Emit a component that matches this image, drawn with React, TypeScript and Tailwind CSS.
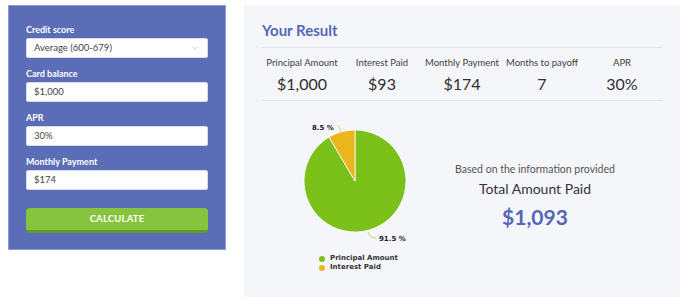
import React from "react";

const F = { fontFamily: "Lato, 'Open Sans', sans-serif" };

function Field({ label, value, select }: { label: string; value: string; select?: boolean }) {
  return (
    <div className="flex flex-col">
      <div className="h-[12px] text-[9px] leading-[12px] font-bold text-white">{label}</div>
      <div className="mt-[2px] h-[20px] bg-white rounded-[2px] border border-[#d8dbe6] flex items-center justify-between pl-[7px] pr-[9px] text-[9.5px] text-[#444]">
        <span>{value}</span>
        {select && (
          <svg width="6" height="4" viewBox="0 0 6 4">
            <path d="M0.5 0.5 L3 3 L5.5 0.5" fill="none" stroke="#c3c6cf" strokeWidth="0.8" />
          </svg>
        )}
      </div>
    </div>
  );
}

function Stat({ label, value }: { label: string; value: string }) {
  return (
    <div className="w-[80px] flex flex-col items-center">
      <div className="text-[9.5px] leading-[12px] text-[#3d3d3d] whitespace-nowrap">{label}</div>
      <div className="mt-[5px] text-[16px] leading-[20px] text-[#2f2f2f]">{value}</div>
    </div>
  );
}

function Pie() {
  const cx = 93, cy = 65, r = 51;
  const a = (8.5 / 100) * Math.PI * 2;
  const px = cx - r * Math.sin(a);
  const py = cy - r * Math.cos(a);
  const green = `M${cx} ${cy} L${cx} ${cy - r} A${r} ${r} 0 1 1 ${px} ${py} Z`;
  const yellow = `M${cx} ${cy} L${px} ${py} A${r} ${r} 0 0 1 ${cx} ${cy - r} Z`;
  return (
    <svg width="186" height="130" viewBox="0 0 186 130" style={{ fontFamily: "'DejaVu Sans', sans-serif" }}>
      <path d={green} fill="#7cc11a" stroke="#ffffff" strokeWidth="0.8" />
      <path d={yellow} fill="#ebb51e" stroke="#ffffff" strokeWidth="0.8" />
      <path d="M79 16 C78 12 77 10 75 9" fill="none" stroke="#ebb51e" strokeWidth="0.7" />
      <path d="M106 116 C108 120 110 122 114 122" fill="none" stroke="#7cc11a" strokeWidth="0.7" />
      <text x="50" y="14" fontSize="7" fontWeight="bold" fill="#222">8.5 %</text>
      <text x="117" y="125" fontSize="7" fontWeight="bold" fill="#222">91.5 %</text>
    </svg>
  );
}

export default function App() {
  return (
    <div className="w-[700px] h-[297px] bg-white flex overflow-hidden" style={F}>
      <div className="ml-[8px] mt-[5px] w-[218px] h-[245px] bg-[#5a6db6] border border-[#8b9ad0] px-[17px] pt-[18px] flex flex-col">
        <Field label="Credit score" value="Average (600-679)" select />
        <div className="mt-[10px]">
          <Field label="Card balance" value="$1,000" />
        </div>
        <div className="mt-[10px]">
          <Field label="APR" value="30%" />
        </div>
        <div className="mt-[10px]">
          <Field label="Monthly Payment" value="$174" />
        </div>
        <button className="mt-[18px] h-[25px] rounded-[4px] bg-[#86c43f] border-b-[3px] border-[#5d9a26] text-white text-[9.5px] font-bold tracking-[0.2px]">
          CALCULATE
        </button>
      </div>
      <div className="ml-[18px] mt-[5px] w-[436px] h-[292px] bg-[#f5f6fa] px-[18px] flex flex-col">
        <div className="mt-[15px] text-[15px] leading-[20px] font-bold text-[#5467b6]">Your Result</div>
        <div className="mt-[7px] h-px bg-[#e2e4ea]" />
        <div className="flex pt-[9px] pb-[6px]">
          <Stat label="Principal Amount" value="$1,000" />
          <Stat label="Interest Paid" value="$93" />
          <Stat label="Monthly Payment" value="$174" />
          <Stat label="Months to payoff" value="7" />
          <Stat label="APR" value="30%" />
        </div>
        <div className="h-px bg-[#e2e4ea]" />
        <div className="flex mt-[15px]">
          <div className="w-[186px] flex flex-col">
            <Pie />
            <div className="ml-[57px] mt-[8px] flex flex-col text-[7px] leading-[9px] font-bold text-[#333]" style={{ fontFamily: "'DejaVu Sans', sans-serif" }}>
              <div className="flex items-center gap-[5px]">
                <span className="w-[6px] h-[6px] rounded-full bg-[#7cc11a]" />
                <span>Principal Amount</span>
              </div>
              <div className="flex items-center gap-[5px]">
                <span className="w-[6px] h-[6px] rounded-full bg-[#ebb51e]" />
                <span>Interest Paid</span>
              </div>
            </div>
          </div>
          <div className="w-[174px] flex flex-col items-center mt-[46px]">
            <div className="text-[10.5px] leading-[14px] text-[#555] whitespace-nowrap">Based on the information provided</div>
            <div className="mt-[5px] text-[14px] leading-[16px] text-[#333] whitespace-nowrap">Total Amount Paid</div>
            <div className="mt-[7px] text-[21px] leading-[26px] font-bold text-[#5467b6]">$1,093</div>
          </div>
        </div>
      </div>
    </div>
  );
}
